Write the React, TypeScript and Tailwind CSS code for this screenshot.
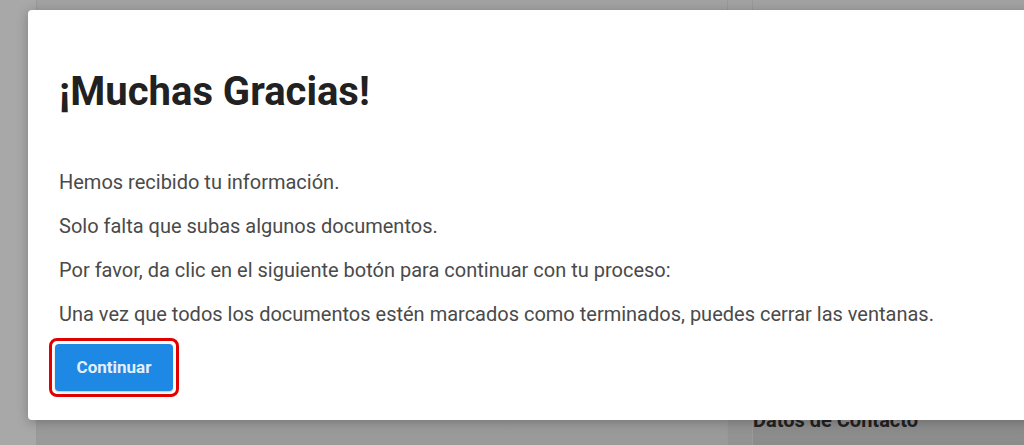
export default function App() {
  const lines = [
    'Hemos recibido tu información.',
    'Solo falta que subas algunos documentos.',
    'Por favor, da clic en el siguiente botón para continuar con tu proceso:',
    'Una vez que todos los documentos estén marcados como terminados, puedes cerrar las ventanas.',
  ];

  return (
    <div className="relative h-[445px] w-[1024px] overflow-hidden bg-[#a6a6a6] font-['Roboto','Liberation_Sans',sans-serif]">
      {/* page behind the overlay */}
      <div className="flex h-full">
        <div className="w-[36px] shrink-0 bg-[#a8a8a8]" />
        <div className="w-[691px] shrink-0 border-l border-[#999] bg-gradient-to-b from-[#a3a3a3] via-[#a0a0a0] to-[#9a9a9a]" />
        <div className="w-[25px] shrink-0 border-l border-[#999] bg-gradient-to-b from-[#a3a3a3] to-[#929292]" />
        <div className="flex flex-1 flex-col justify-end border-l border-[#999] bg-gradient-to-b from-[#a3a3a3] to-[#8c8c8c]">
          <div className="pb-[15px] text-[20px] font-bold leading-none text-[#222]">Datos de Contacto</div>
        </div>
      </div>

      {/* modal */}
      <div className="absolute left-[28px] top-[10px] h-[410px] w-[1010px] rounded-[4px] bg-white shadow-[0_2px_12px_rgba(0,0,0,0.25)]">
        <div className="pl-[31px] pt-[58px]">
          <h1 className="text-[40px] font-bold leading-[48px] text-[#212121]">¡Muchas Gracias!</h1>
          <div className="mt-[52px] flex flex-col gap-[16px] text-[20px] leading-[28px] text-[#4a4a4a]">
            {lines.map((l) => (
              <p key={l}>{l}</p>
            ))}
          </div>
          <div className="mt-[10px] ml-[-10px] inline-block rounded-[8px] border-[3px] border-[#e00000] p-[3px]">
            <button className="h-[47px] w-[118px] rounded-[4px] bg-[#1e88e5] text-[17px] font-bold text-[#e3f0fb] shadow-[0_1px_2px_rgba(0,0,0,0.25)]">
              Continuar
            </button>
          </div>
        </div>
      </div>
    </div>
  );
}
